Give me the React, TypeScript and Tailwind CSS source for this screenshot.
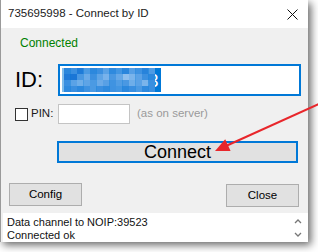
import React from "react";

const mosaic = [
  ["#2a86dc", "#3a8fe0", "#1f7bd8", "#4b9ae3", "#2c88dd", "#3b8fe0", "#5aa2e6", "#2f8ade", "#4396e2", "#2a86dc", "#569fe5", "#3e92e1", "#2783db", "#4e9be4"],
  ["#1f7ad8", "#1a76d6", "#4a98e2", "#6aaae8", "#3c90e0", "#5ea4e6", "#78b2eb", "#4a98e2", "#66a8e7", "#8ebfee", "#7ab4eb", "#5ba2e6", "#3c90e0", "#2c88dd"],
  ["#3a8fe0", "#5aa2e6", "#6eaee9", "#5ea4e6", "#4b9ae3", "#6aaae8", "#58a0e5", "#3f93e1", "#519de4", "#4a98e2", "#6eaee9", "#5aa2e6", "#7ab4eb", "#3a8fe0"],
  ["#2f8ade", "#3a8fe0", "#2c88dd", "#3e92e1", "#4b9ae3", "#3a8fe0", "#2f8ade", "#3e92e1", "#4396e2", "#2c88dd", "#3a8fe0", "#4b9ae3", "#2f8ade", "#3a8fe0"],
];

function Mosaic() {
  return (
    <svg width="99" height="24" viewBox="0 0 99 24" className="block">
      <rect width="99" height="24" fill="#0078d7" />
      <text x="86" y="19" fontSize="19" fill="#ffffff" fontFamily="Liberation Sans, Arial, sans-serif">3</text>
      {mosaic.map((row, r) =>
        row.map((c, i) => (
          <rect key={`${r}-${i}`} x={2 + i * 6.5} y={r * 6} width="6.5" height="6" fill={c} />
        ))
      )}
      <rect x="0" y="0" width="2" height="24" fill="#ffffff" opacity="0.5" />
    </svg>
  );
}

export default function App() {
  return (
    <div className="relative w-[318px] h-[252px] bg-white overflow-hidden font-['Liberation_Sans',Arial,sans-serif] text-black">
      <div className="w-[308px] h-[242px] bg-[#f0f0f0] border-l border-[#9a9a9a] shadow-[3px_3px_8px_rgba(0,0,0,0.6)] flex flex-col">
        {/* title bar */}
        <div className="h-[28px] bg-white flex items-center justify-between pl-[7px] pr-[10px]">
          <span className="text-[11.5px] leading-none text-[#1a1a1a]">735695998 - Connect by ID</span>
          <svg width="11" height="11" viewBox="0 0 11 11">
            <path d="M0.5 0.5 L10.5 10.5 M10.5 0.5 L0.5 10.5" stroke="#111" strokeWidth="1" />
          </svg>
        </div>

        <div className="mt-[7px] pl-[19px] text-[12px] leading-[16px] text-[#008000]">Connected</div>

        {/* ID row */}
        <div className="mt-[13px] flex items-center h-[32px]">
          <span className="w-[57px] pl-[14px] text-[22px] leading-none">ID:</span>
          <div className="w-[243px] h-[32px] bg-white border-2 border-[#0078d7] flex items-center pl-[2px]">
            <Mosaic />
          </div>
        </div>

        {/* PIN row */}
        <div className="mt-[8px] flex items-center h-[20px]">
          <div className="ml-[14px] w-[13px] h-[13px] border border-[#333] bg-white" />
          <span className="ml-[3px] w-[27px] text-[11.5px] text-[#1a1a1a]">PIN:</span>
          <div className="w-[72px] h-[20px] bg-white border border-[#c4c4c4]" />
          <span className="ml-[7px] text-[11.5px] text-[#9a9a9a]">(as on server)</span>
        </div>

        {/* Connect */}
        <div className="mt-[17px] pl-[56px]">
          <button className="w-[241px] h-[22px] bg-[#e1e1e1] border-2 border-[#0078d7] flex items-center justify-center text-[18px] leading-none">
            Connect
          </button>
        </div>

        {/* bottom buttons */}
        <div className="mt-[20px] flex justify-between pl-[8px] pr-[9px]">
          <button className="w-[73px] h-[23px] bg-[#e1e1e1] border border-[#adadad] text-[11.5px] flex items-center justify-center">
            Config
          </button>
          <button className="mt-[1px] w-[73px] h-[23px] bg-[#e1e1e1] border border-[#adadad] text-[11.5px] flex items-center justify-center">
            Close
          </button>
        </div>

        {/* log */}
        <div className="mt-auto ml-[2px] h-[29px] bg-white flex justify-between pl-[4px] pr-[6px]">
          <div className="text-[11px] leading-[12.5px] pt-[3px] text-[#111]">
            <div>Data channel to NOIP:39523</div>
            <div>Connected ok</div>
          </div>
          <svg width="8" height="22" viewBox="0 0 8 22" className="mt-[5px]">
            <path d="M1 5 L4 2 L7 5" stroke="#777" strokeWidth="1.3" fill="none" />
            <path d="M1 15 L4 18 L7 15" stroke="#777" strokeWidth="1.3" fill="none" />
          </svg>
        </div>
      </div>

      {/* red arrow annotation */}
      <svg className="absolute inset-0 pointer-events-none" width="318" height="252" viewBox="0 0 318 252">
        <line x1="319" y1="104" x2="227" y2="145.5" stroke="#e8262b" strokeWidth="2" />
        <polygon points="215,151 225.2,139.2 230.6,151" fill="#e8262b" />
      </svg>
    </div>
  );
}
